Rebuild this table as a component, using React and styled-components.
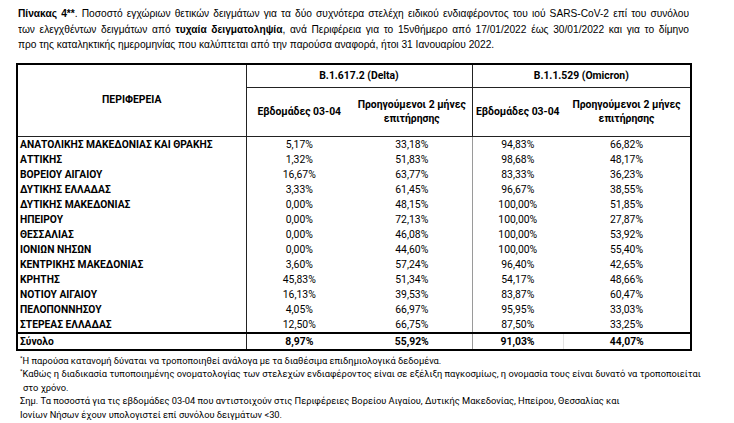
import React from "react";
import styled, { createGlobalStyle } from "styled-components";

const Global = createGlobalStyle`
  html, body { margin: 0; padding: 0; background: #fff; }
  body { font-family: Roboto, "Liberation Sans", sans-serif; color: #000; }
`;

const Page = styled.div`
  width: 734px;
  height: 423px;
  box-sizing: border-box;
  padding: 6px 0 0 18px;
  overflow: hidden;
`;

const Caption = styled.div`
  font-family: "Liberation Sans", Arial, sans-serif;
  font-size: 10.2px;
  line-height: 15.5px;
  width: 671px;
`;

const CaptionLine = styled.div`
  text-align: ${(p) => (p.$justify ? "justify" : "left")};
  text-align-last: ${(p) => (p.$justify ? "justify" : "auto")};
  white-space: ${(p) => (p.$justify ? "normal" : "nowrap")};
  height: 15.5px;
  overflow: hidden;
`;

const TableWrap = styled.div`
  margin: 10px 0 0 -2px;
`;

const Table = styled.table`
  border-collapse: collapse;
  table-layout: fixed;
  width: 674px;
  border: 2px solid #000;
  font-family: Roboto, "Liberation Sans", sans-serif;
  font-size: 10.4px;
`;

const HeadCell = styled.th`
  font-weight: 700;
  text-align: center;
  vertical-align: middle;
  padding: 0 2px;
  line-height: 13.5px;
  height: ${(p) => p.$h || "auto"};
  border-right: ${(p) => (p.$right ? "1.5px solid #222" : "none")};
  border-bottom: 1px solid #222;
`;

const Row = styled.tr`
  height: 15px;
`;

const RegionCell = styled.td`
  font-weight: 700;
  font-size: 10.25px;
  text-align: left;
  padding: 0 0 0 2px;
  line-height: 15px;
  white-space: nowrap;
  border-right: 1px solid #222;
`;

const ValueCell = styled.td`
  text-align: center;
  padding: 0;
  line-height: 15px;
  border-right: ${(p) =>
    p.$sep === "strong" ? "1px solid #9a9a9a" : p.$sep === "light" ? "1px solid #e2e2e2" : "none"};
`;

const TotalRow = styled.tr`
  height: 17px;
  border-top: 2px solid #000;
  td { font-weight: 700; }
`;

const Notes = styled.div`
  margin-top: 3px;
  font-family: Roboto, "Liberation Sans", sans-serif;
  font-size: 9.3px;
  line-height: 13.5px;
  padding-left: 2px;
`;

const NoteLine = styled.div`
  white-space: nowrap;
  padding-left: ${(p) => (p.$indent ? "3px" : "0")};
`;

const Sup = styled.sup`
  font-size: 6px;
  vertical-align: 4px;
  line-height: 0;
`;

const rows = [
  ["ΑΝΑΤΟΛΙΚΗΣ ΜΑΚΕΔΟΝΙΑΣ ΚΑΙ ΘΡΑΚΗΣ", "5,17%", "33,18%", "94,83%", "66,82%"],
  ["ΑΤΤΙΚΗΣ", "1,32%", "51,83%", "98,68%", "48,17%"],
  ["ΒΟΡΕΙΟΥ ΑΙΓΑΙΟΥ", "16,67%", "63,77%", "83,33%", "36,23%"],
  ["ΔΥΤΙΚΗΣ ΕΛΛΑΔΑΣ", "3,33%", "61,45%", "96,67%", "38,55%"],
  ["ΔΥΤΙΚΗΣ ΜΑΚΕΔΟΝΙΑΣ", "0,00%", "48,15%", "100,00%", "51,85%"],
  ["ΗΠΕΙΡΟΥ", "0,00%", "72,13%", "100,00%", "27,87%"],
  ["ΘΕΣΣΑΛΙΑΣ", "0,00%", "46,08%", "100,00%", "53,92%"],
  ["ΙΟΝΙΩΝ ΝΗΣΩΝ", "0,00%", "44,60%", "100,00%", "55,40%"],
  ["ΚΕΝΤΡΙΚΗΣ ΜΑΚΕΔΟΝΙΑΣ", "3,60%", "57,24%", "96,40%", "42,65%"],
  ["ΚΡΗΤΗΣ", "45,83%", "51,34%", "54,17%", "48,66%"],
  ["ΝΟΤΙΟΥ ΑΙΓΑΙΟΥ", "16,13%", "39,53%", "83,87%", "60,47%"],
  ["ΠΕΛΟΠΟΝΝΗΣΟΥ", "4,05%", "66,97%", "95,95%", "33,03%"],
  ["ΣΤΕΡΕΑΣ ΕΛΛΑΔΑΣ", "12,50%", "66,75%", "87,50%", "33,25%"],
];

export default function App() {
  return (
    <>
      <Global />
      <Page>
        <Caption>
          <CaptionLine $justify>
            <b>Πίνακας 4**</b>. Ποσοστό εγχώριων θετικών δειγμάτων για τα δύο συχνότερα στελέχη ειδικού ενδιαφέροντος του ιού SARS-CoV-2 επί του συνόλου
          </CaptionLine>
          <CaptionLine $justify>
            των ελεγχθέντων δειγμάτων από <b>τυχαία δειγματοληψία</b>, ανά Περιφέρεια για το 15νθήμερο από 17/01/2022 έως 30/01/2022 και για το δίμηνο
          </CaptionLine>
          <CaptionLine>
            προ της καταληκτικής ημερομηνίας που καλύπτεται από την παρούσα αναφορά, ήτοι 31 Ιανουαρίου 2022.
          </CaptionLine>
        </Caption>
        <TableWrap>
          <Table>
            <colgroup>
              <col style={{ width: "229px" }} />
              <col style={{ width: "106px" }} />
              <col style={{ width: "120px" }} />
              <col style={{ width: "91px" }} />
              <col style={{ width: "128px" }} />
            </colgroup>
            <thead>
              <tr>
                <HeadCell rowSpan={2} $right>ΠΕΡΙΦΕΡΕΙΑ</HeadCell>
                <HeadCell colSpan={2} $right $h="22px">B.1.617.2 (Delta)</HeadCell>
                <HeadCell colSpan={2} $h="22px">B.1.1.529 (Omicron)</HeadCell>
              </tr>
              <tr>
                <HeadCell $h="48px">Εβδομάδες 03-04</HeadCell>
                <HeadCell $right>Προηγούμενοι 2 μήνες<br />επιτήρησης</HeadCell>
                <HeadCell>Εβδομάδες 03-04</HeadCell>
                <HeadCell>Προηγούμενοι 2 μήνες<br />επιτήρησης</HeadCell>
              </tr>
            </thead>
            <tbody>
              {rows.map((r) => (
                <Row key={r[0]}>
                  <RegionCell>{r[0]}</RegionCell>
                  <ValueCell>{r[1]}</ValueCell>
                  <ValueCell $sep="strong">{r[2]}</ValueCell>
                  <ValueCell>{r[3]}</ValueCell>
                  <ValueCell>{r[4]}</ValueCell>
                </Row>
              ))}
              <TotalRow>
                <RegionCell>Σύνολο</RegionCell>
                <ValueCell>8,97%</ValueCell>
                <ValueCell $sep="strong">55,92%</ValueCell>
                <ValueCell $sep="light">91,03%</ValueCell>
                <ValueCell>44,07%</ValueCell>
              </TotalRow>
            </tbody>
          </Table>
        </TableWrap>
        <Notes>
          <NoteLine><Sup>*</Sup>Η παρούσα κατανομή δύναται να τροποποιηθεί ανάλογα με τα διαθέσιμα επιδημιολογικά δεδομένα.</NoteLine>
          <NoteLine><Sup>*</Sup>Καθώς η διαδικασία τυποποιημένης ονοματολογίας των στελεχών ενδιαφέροντος είναι σε εξέλιξη παγκοσμίως, η ονομασία τους είναι δυνατό να τροποποιείται</NoteLine>
          <NoteLine $indent>στο χρόνο.</NoteLine>
          <NoteLine>Σημ. Τα ποσοστά για τις εβδομάδες 03-04 που αντιστοιχούν στις Περιφέρειες Βορείου Αιγαίου, Δυτικής Μακεδονίας, Ηπείρου, Θεσσαλίας και</NoteLine>
          <NoteLine>Ιονίων Νήσων έχουν υπολογιστεί επί συνόλου δειγμάτων &lt;30.</NoteLine>
        </Notes>
      </Page>
    </>
  );
}
